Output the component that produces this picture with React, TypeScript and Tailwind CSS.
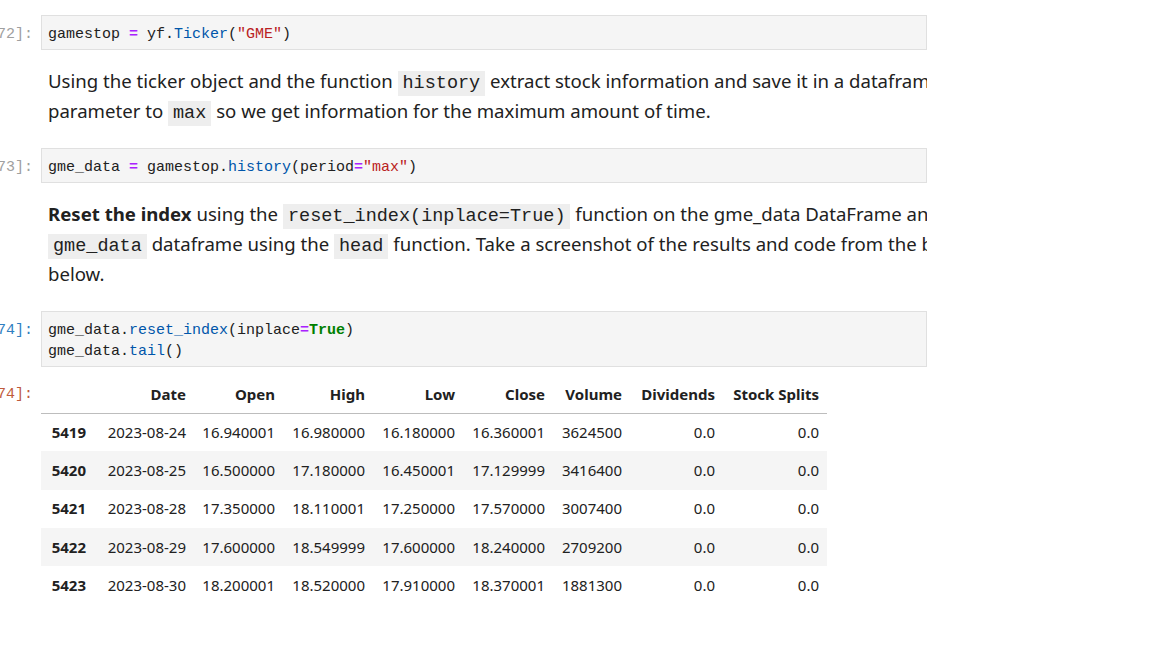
import React from 'react';

const mono = "font-['Liberation_Mono','DejaVu_Sans_Mono',monospace]";
const sans = "font-['Noto_Sans','Open_Sans',sans-serif]";

const Op = ({ children }: { children: React.ReactNode }) => (
  <span className="font-bold text-[#aa22ff]">{children}</span>
);
const Prop = ({ children }: { children: React.ReactNode }) => (
  <span className="text-[#0055aa]">{children}</span>
);
const Str = ({ children }: { children: React.ReactNode }) => (
  <span className="text-[#ba2121]">{children}</span>
);
const Kw = ({ children }: { children: React.ReactNode }) => (
  <span className="font-bold text-[#008000]">{children}</span>
);

const InlineCode = ({ children }: { children: React.ReactNode }) => (
  <code className={`${mono} bg-[#eeeeee] px-[5px] py-[2px] text-[18.5px] leading-none text-[#212121]`}>{children}</code>
);

const Prompt = ({ label, color }: { label: string; color: string }) => (
  <div className={`w-[41px] shrink-0 flex justify-end pr-[8px] ${mono} text-[15px] leading-[21px] whitespace-nowrap ${color}`}>
    <span>{label}</span>
  </div>
);

const CodeCell = ({ n, active, children }: { n: number; active?: boolean; children: React.ReactNode }) => (
  <div className="flex">
    <div className="pt-[9px]">
      <Prompt label={`[${n}]:`} color={active ? 'text-[#307fc1]' : 'text-[#a0a0a0]'} />
    </div>
    <div className={`flex-1 bg-[#f5f5f5] border border-[#e0e0e0] px-[6px] pt-[8px] pb-[4px] ${mono} text-[15px] leading-[21px] text-[#212121] whitespace-pre`}>
      {children}
    </div>
  </div>
);

const Line = ({ children }: { children: React.ReactNode }) => (
  <div className="h-[30px] leading-[30px]">{children}</div>
);

const Markdown = ({ children }: { children: React.ReactNode }) => (
  <div className="flex">
    <div className="w-[41px] shrink-0" />
    <div className={`flex-1 pl-[7px] ${sans} text-[18.6px] text-[#212121] whitespace-nowrap`}>
      {children}
    </div>
  </div>
);

const columns = [
  { name: '', w: 'w-[53px]' },
  { name: 'Date', w: 'w-[100px]' },
  { name: 'Open', w: 'w-[89px]' },
  { name: 'High', w: 'w-[90px]' },
  { name: 'Low', w: 'w-[90px]' },
  { name: 'Close', w: 'w-[90px]' },
  { name: 'Volume', w: 'w-[77px]' },
  { name: 'Dividends', w: 'w-[93px]' },
  { name: 'Stock Splits', w: 'w-[104px]' },
];

const rows = [
  ['5419', '2023-08-24', '16.940001', '16.980000', '16.180000', '16.360001', '3624500', '0.0', '0.0'],
  ['5420', '2023-08-25', '16.500000', '17.180000', '16.450001', '17.129999', '3416400', '0.0', '0.0'],
  ['5421', '2023-08-28', '17.350000', '18.110001', '17.250000', '17.570000', '3007400', '0.0', '0.0'],
  ['5422', '2023-08-29', '17.600000', '18.549999', '17.600000', '18.240000', '2709200', '0.0', '0.0'],
  ['5423', '2023-08-30', '18.200001', '18.520000', '17.910000', '18.370001', '1881300', '0.0', '0.0'],
];

export default function App() {
  return (
    <div className="min-h-screen bg-white">
      <div className="w-[927px] overflow-hidden pt-[15px]">
        <CodeCell n={72}>
          gamestop <Op>=</Op> yf.<Prop>Ticker</Prop>(<Str>"GME"</Str>)
        </CodeCell>

        <div className="mt-[16px]">
          <Markdown>
            <Line>
              Using the ticker object and the function <InlineCode>history</InlineCode> extract stock information and save it in a dataframe named gme_data. Set the <InlineCode>period</InlineCode>
            </Line>
            <Line>
              parameter to <InlineCode>max</InlineCode> so we get information for the maximum amount of time.
            </Line>
          </Markdown>
        </div>

        <div className="mt-[22px]">
          <CodeCell n={73}>
            gme_data <Op>=</Op> gamestop.<Prop>history</Prop>(period<Op>=</Op><Str>"max"</Str>)
          </CodeCell>
        </div>

        <div className="mt-[16px]">
          <Markdown>
            <Line>
              <b className="font-bold">Reset the index</b> using the <InlineCode>reset_index(inplace=True)</InlineCode> function on the gme_data DataFrame and display the first five rows of the
            </Line>
            <Line>
              <InlineCode>gme_data</InlineCode> dataframe using the <InlineCode>head</InlineCode> function. Take a screenshot of the results and code from the beginning of Question 2 to the results
            </Line>
            <Line>below.</Line>
          </Markdown>
        </div>

        <div className="mt-[22px]">
          <CodeCell n={74} active>
            {'gme_data.'}<Prop>reset_index</Prop>(inplace<Op>=</Op><Kw>True</Kw>){'\n'}gme_data.<Prop>tail</Prop>()
          </CodeCell>
        </div>

        {/* Output */}
        <div className="flex mt-[9px]">
          <div className="pt-[8px]">
            <Prompt label="[74]:" color="text-[#bf5b3d]" />
          </div>
          <table className={`table-fixed border-collapse ${sans} text-[15px] text-[#212121]`}>
            <thead>
              <tr className="border-b border-[#bdbdbd]">
                {columns.map((c, i) => (
                  <th key={i} className={`${c.w} h-[37px] pr-[8px] text-right font-bold align-middle whitespace-nowrap`}>
                    {c.name}
                  </th>
                ))}
              </tr>
            </thead>
            <tbody>
              {rows.map((r, ri) => (
                <tr key={r[0]} className={ri % 2 === 1 ? 'bg-[#f5f5f5]' : 'bg-white'}>
                  {r.map((v, ci) => (
                    <td
                      key={ci}
                      className={`h-[38.3px] pr-[8px] text-right align-middle whitespace-nowrap ${ci === 0 ? 'font-bold' : ''}`}
                    >
                      {v}
                    </td>
                  ))}
                </tr>
              ))}
            </tbody>
          </table>
        </div>
      </div>
    </div>
  );
}
